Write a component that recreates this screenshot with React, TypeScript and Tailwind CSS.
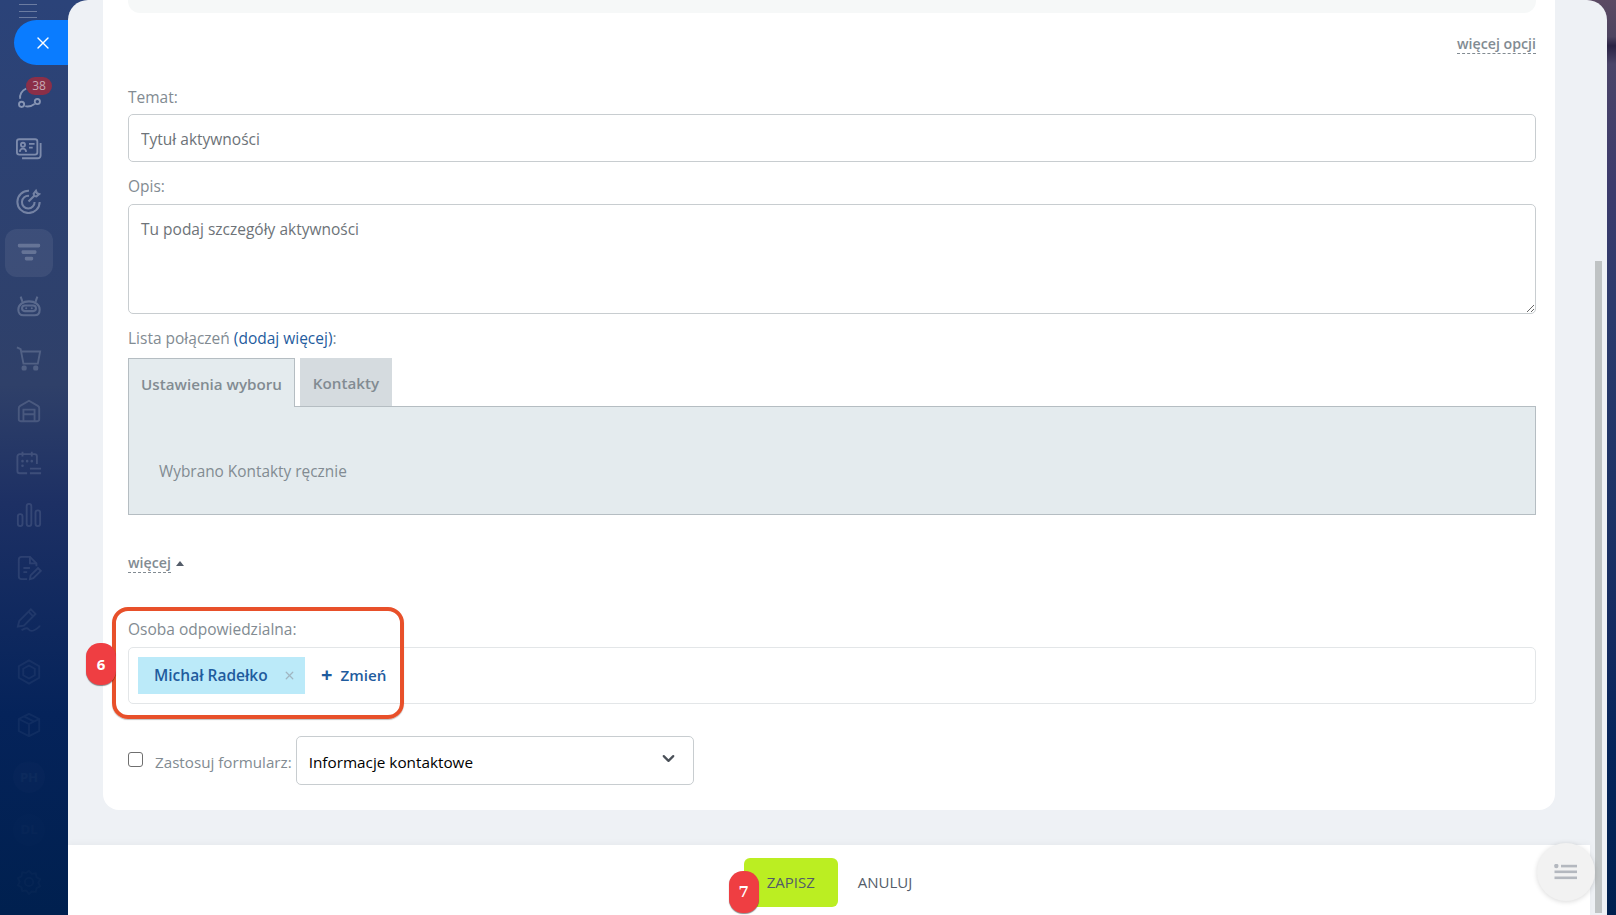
import { ChevronDown, X } from 'lucide-react';

// sidebar icons, drawn on a 28x28 box
const iconClass = 'w-[26px] h-[26px]';

function ConnectIcon() {
  return (
    <svg viewBox="0 0 28 28" fill="none" stroke="currentColor" strokeWidth="2" className={iconClass}>
      <circle cx="6" cy="23" r="2.8" />
      <circle cx="23" cy="20" r="2.8" />
      <path d="M4.5 17c-.8-4 1.5-9 6.500-11" />
      <path d="M10 25c3.500.8 7-.2 10-2.500" />
    </svg>
  );
}

function CardIcon() {
  return (
    <svg viewBox="0 0 28 28" fill="none" stroke="currentColor" strokeWidth="2" className={iconClass}>
      <rect x="1" y="3.5" width="22" height="16.5" rx="2.5" />
      <circle cx="7.5" cy="9.5" r="2.2" />
      <path d="M4 17c.4-2.400 2-3.400 3.500-3.400s3.100 1 3.500 3.400" />
      <path d="M14 8.500h6M14 12.500h4" />
      <path d="M26.500 7.500v13.500a3 3 0 0 1-3 3H6.500" />
    </svg>
  );
}

function TargetIcon() {
  return (
    <svg viewBox="0 0 28 28" fill="none" stroke="currentColor" strokeWidth="2.2" className={iconClass}>
      <path d="M14 3a12 12 0 1 0 11.500 12" />
      <path d="M14 8.500a6.800 6.800 0 1 0 6 6.500" />
      <path d="M13.500 14.500l6.500-6.500" />
      <path d="M19 6l2.500-3 1 2.500 2.500 1-3 2.500-2.500-.5z" />
    </svg>
  );
}

function FunnelIcon() {
  return (
    <svg viewBox="0 0 28 28" fill="currentColor" className={iconClass}>
      <rect x="2" y="4" width="24" height="4" rx="1.5" />
      <rect x="6" y="11" width="16" height="4" rx="1.5" />
      <rect x="9.5" y="18" width="9" height="4" rx="1.5" />
    </svg>
  );
}

function RobotIcon() {
  return (
    <svg viewBox="0 0 28 28" fill="none" stroke="currentColor" strokeWidth="2.2" className={iconClass}>
      <path d="M2.500 18C2.500 12.500 7.500 9 14 9s11.500 3.500 11.500 9c0 3.500-2 6-5.500 6H8c-3.500 0-5.500-2.500-5.500-6z" />
      <rect x="6.5" y="13.5" width="15" height="6" rx="3" />
      <path d="M7 9.500L5 4M21 9.500L23 4" />
      <path d="M11 16.500h.01M17 16.500h.01" strokeLinecap="round" />
    </svg>
  );
}

function CartIcon() {
  return (
    <svg viewBox="0 0 28 28" fill="none" stroke="currentColor" strokeWidth="2" className={iconClass}>
      <path d="M1 2.500l4 2 3 15.500h15.500L26 7H5.500" />
      <rect x="7" y="23" width="3.5" height="3.5" rx="1" fill="currentColor" />
      <rect x="19.5" y="23" width="3.5" height="3.5" rx="1" fill="currentColor" />
    </svg>
  );
}

function GarageIcon() {
  return (
    <svg viewBox="0 0 28 28" fill="none" stroke="currentColor" strokeWidth="2" className={iconClass}>
      <path d="M3 23V11c0-1.200.6-2 1.500-2.500L14 3l9.500 5.500c.9.500 1.500 1.300 1.500 2.500v12a2 2 0 0 1-2 2H5a2 2 0 0 1-2-2z" />
      <path d="M8 25V12.500h12V25M8 17.500h12" />
    </svg>
  );
}

function CalendarIcon() {
  return (
    <svg viewBox="0 0 28 28" fill="none" stroke="currentColor" strokeWidth="2" className={iconClass}>
      <path d="M12 25H4a2.500 2.500 0 0 1-2.500-2.500V7A2.500 2.500 0 0 1 4 4.500h16A2.500 2.500 0 0 1 22.500 7v8" />
      <path d="M7 2v5M17 2v5" />
      <path d="M7 12h.01M12 12h.01M17 12h.01M7 17h.01" strokeWidth="2.8" strokeLinecap="round" />
      <path d="M15 20h12M15 25h12" />
    </svg>
  );
}

function BarsIcon() {
  return (
    <svg viewBox="0 0 28 28" fill="none" stroke="currentColor" strokeWidth="2" className={iconClass}>
      <rect x="2" y="13" width="5" height="13" rx="2.5" />
      <rect x="11.5" y="2" width="5" height="24" rx="2.5" />
      <rect x="21" y="9" width="5" height="17" rx="2.5" />
    </svg>
  );
}

function NoteIcon() {
  return (
    <svg viewBox="0 0 28 28" fill="none" stroke="currentColor" strokeWidth="2" className={iconClass}>
      <path d="M12 26H6a3 3 0 0 1-3-3V5a3 3 0 0 1 3-3h9l7 7v3" />
      <path d="M15 2v7h7" />
      <path d="M8 14h7M8 18.500h4" />
      <path d="M15 26l.7-4 8-8 3 3-8 8z" />
    </svg>
  );
}

function PenIcon() {
  return (
    <svg viewBox="0 0 28 28" fill="none" stroke="currentColor" strokeWidth="2" className={iconClass}>
      <path d="M2 21l1.500-6L16 2.500l5 5L8.500 20z" />
      <path d="M13.500 5l5 5" />
      <path d="M6 25c3-2 6-3 7.500-1s3 2.500 6 1 6-3 6-5" />
    </svg>
  );
}

function HexIcon() {
  return (
    <svg viewBox="0 0 28 28" fill="none" stroke="currentColor" strokeWidth="2" className={iconClass}>
      <path d="M14 1.500l11 6.300v12.400l-11 6.300-11-6.300V7.800z" />
      <path d="M14 7l6.200 3.500v7L14 21l-6.200-3.500v-7z" />
    </svg>
  );
}

function BoxIcon() {
  return (
    <svg viewBox="0 0 28 28" fill="none" stroke="currentColor" strokeWidth="2" className={iconClass}>
      <path d="M14 2l11 5.500v13L14 26 3 20.500v-13z" />
      <path d="M3 7.500L14 13l11-5.500M14 13v13M8.500 4.700l11 5.600" />
    </svg>
  );
}

function GearIcon() {
  return (
    <svg viewBox="0 0 28 28" fill="none" stroke="currentColor" strokeWidth="2" className={iconClass}>
      <path d="M14 2l3 3.200 4.300-.6.800 4.300 3.900 2-2 3.900 2 3.900-3.900 2-.8 3.900-4.300-.4L14 27l-3-3.800-4.300.4-.8-3.900-3.900-2 2-3.900-2-3.900 3.900-2 .8-4.300 4.300.6z" />
      <circle cx="14" cy="14" r="4.5" />
    </svg>
  );
}

function Initials({ text }: { text: string }) {
  return (
    <div className="w-8 h-8 rounded-full bg-white/30 flex items-center justify-center text-[13px] font-bold leading-none">
      {text}
    </div>
  );
}

const railItems = [
  { icon: <ConnectIcon />, tone: 'opacity-50' },
  { icon: <CardIcon />, tone: 'opacity-45' },
  { icon: <TargetIcon />, tone: 'opacity-40' },
  { icon: <FunnelIcon />, tone: 'opacity-25', active: true },
  { icon: <RobotIcon />, tone: 'opacity-25' },
  { icon: <CartIcon />, tone: 'opacity-20' },
  { icon: <GarageIcon />, tone: 'opacity-[0.17]' },
  { icon: <CalendarIcon />, tone: 'opacity-15' },
  { icon: <BarsIcon />, tone: 'opacity-[0.13]' },
  { icon: <NoteIcon />, tone: 'opacity-[0.11]' },
  { icon: <PenIcon />, tone: 'opacity-[0.08]' },
  { icon: <HexIcon />, tone: 'opacity-[0.06]' },
  { icon: <BoxIcon />, tone: 'opacity-[0.05]' },
  { icon: <Initials text="PH" />, tone: 'opacity-[0.04]' },
  { icon: <Initials text="DL" />, tone: 'opacity-[0.02]' },
  { icon: <GearIcon />, tone: 'opacity-[0.02]' },
];

function Sidebar() {
  return (
    <aside className="w-[68px] h-full shrink-0 flex flex-col overflow-hidden bg-[linear-gradient(180deg,#2b4379_0%,#2f4069_42%,#1d3064_55%,#05235a_78%,#00204f_100%)]">
      <div className="h-5 pl-[19px] pt-1 shrink-0">
        <div className="w-[18px] h-[14px] flex flex-col justify-between opacity-30">
          <div className="h-px bg-white" />
          <div className="h-px bg-white" />
          <div className="h-px bg-white" />
        </div>
      </div>
      <div className="ml-[14px] w-[54px] h-[45px] shrink-0 rounded-l-full bg-[#0a7cff] flex items-center justify-center pl-[3px] text-white">
        <X size={20} strokeWidth={1.6} />
      </div>
      <div className="mt-[5px] flex flex-col">
        {railItems.map((item, i) => (
          <div key={i} className="relative h-[52.4px] shrink-0 flex items-center justify-center pr-[10px]">
            {item.active && <div className="absolute left-[5px] top-[2px] w-12 h-12 rounded-[12px] bg-white/[0.07]" />}
            <div className={`relative text-[#dfe5f2] ${item.tone}`}>{item.icon}</div>
            {i === 0 && (
              <div className="absolute left-[26px] top-[7px] w-[26px] h-[18px] rounded-full bg-[#8b2f48] text-[#c7a9b4] text-[12px] leading-[18px] text-center">
                38
              </div>
            )}
          </div>
        ))}
      </div>
    </aside>
  );
}

function Badge({ value, className }: { value: string; className: string }) {
  return (
    <div
      className={`absolute w-[30px] h-[42px] rounded-[14px] bg-[#ef3e42] text-white font-bold text-[15px] flex items-center justify-center shadow-[0_1px_1px_rgba(0,0,0,0.45)] z-10 ${className}`}
    >
      {value}
    </div>
  );
}

function DashedLink({ children }: { children: React.ReactNode }) {
  return (
    <span className="inline-block text-[14.2px] font-semibold text-[#828b92] leading-[19px] border-b border-dashed border-[#828b92]">
      {children}
    </span>
  );
}

function FormCard() {
  return (
    <div className="h-full rounded-b-[16px] bg-white pl-[25px] pr-[19px]">
      <div className="h-[13px] rounded-b-[12px] bg-[#f6f8f8]" />

      <div className="mt-[21px] h-5 flex justify-end">
        <DashedLink>więcej opcji</DashedLink>
      </div>

      <label className="block mt-[33px] h-5 leading-5">Temat:</label>
      <input
        placeholder="Tytuł aktywności"
        className="block mt-[7px] w-full h-12 px-3 pt-px rounded-[5px] border border-[#c8cdd0] bg-white outline-none placeholder:text-[#6d7378]"
      />

      <label className="block mt-[14px] h-5 leading-5">Opis:</label>
      <textarea
        placeholder="Tu podaj szczegóły aktywności"
        className="block mt-[8px] w-full h-[110px] px-3 py-[13px] leading-[22px] rounded-[5px] border border-[#c8cdd0] bg-white outline-none placeholder:text-[#6d7378]"
      />

      <div className="mt-[14px] h-5 leading-5">
        Lista połączeń <span className="text-[#1f5c9e]">(dodaj więcej)</span>:
      </div>

      <div className="mt-[10px] flex items-end">
        <div className="relative z-10 -mb-px w-[167px] h-[49px] pt-[2px] bg-[#e4ebee] border border-b-0 border-[#b5bdc2] flex items-center justify-center font-semibold text-[15.2px]">
          Ustawienia wyboru
        </div>
        <div className="ml-[5px] w-[92px] h-[48px] pt-[2px] bg-[#d5dbdf] flex items-center justify-center font-semibold text-[15.2px]">
          Kontakty
        </div>
      </div>
      <div className="h-[109px] bg-[#e4ebee] border border-[#b5bdc2] flex items-center pl-[30px] pt-[23px] text-[15.4px]">
        Wybrano Kontakty ręcznie
      </div>

      <div className="mt-[38px] h-5 flex items-center gap-[5px]">
        <DashedLink>więcej</DashedLink>
        <div className="w-0 h-0 border-x-[4px] border-x-transparent border-b-[5px] border-b-[#535c69]" />
      </div>

      <div className="relative mt-[47px]">
        <div className="absolute -left-[16px] -top-[13px] w-[292px] h-[112px] rounded-[16px] border-[4.5px] border-[#e8502a] shadow-[0_1px_1px_rgba(0,0,0,0.25)] pointer-events-none" />
        <Badge value="6" className="-left-[42px] top-[23px]" />
        <div className="h-5 leading-[18px]">Osoba odpowiedzialna:</div>
        <div className="mt-[7px] h-[57px] rounded-[5px] border border-[#e3e6e8] flex items-center pl-[9px]">
          <div className="w-[167px] h-[37px] bg-[#bbeaf9] flex items-center pl-4 font-semibold text-[#1f5c9e]">
            Michał Radełko
            <X size={13} strokeWidth={2.4} className="ml-[15px] text-[#a0b6c2]" />
          </div>
          <div className="ml-4 flex items-center gap-2 font-semibold text-[#1f5c9e] text-[15.2px]">
            <span className="text-[20px] leading-none font-bold">+</span>
            Zmień
          </div>
        </div>
      </div>

      <div className="mt-[32px] flex items-center">
        <input
          type="checkbox"
          className="appearance-none w-[15px] h-[15px] rounded-[3px] border border-[#6f6f6f] bg-white -mt-[2px]"
        />
        <span className="ml-3 mt-[3px] text-[15.2px]">Zastosuj formularz:</span>
        <div className="relative ml-[4px] w-[398px] h-[49px]">
          <select className="appearance-none w-full h-full pl-3 pt-[3px] rounded-[5px] border border-[#c8cdd0] bg-white text-black outline-none text-[15.3px]">
            <option>Informacje kontaktowe</option>
          </select>
          <ChevronDown size={19} strokeWidth={2.8} className="absolute right-[16px] top-[13px] text-[#4a5058]" />
        </div>
      </div>
    </div>
  );
}

export default function App() {
  return (
    <div className="w-[1616px] h-[915px] flex overflow-hidden bg-[#2b4379] font-['Open_Sans',sans-serif] text-[15.5px] text-[#828b92]">
      <Sidebar />

      <main className="relative z-10 w-[1539px] h-full shrink-0 flex rounded-t-[20px] overflow-hidden bg-[#eef1f5]">
        <div className="w-[1522px] h-full flex flex-col">
          <div className="h-[845px] shrink-0 px-[35px] pb-[35px]">
            <FormCard />
          </div>
          <footer className="h-[70px] bg-white flex justify-center items-start pt-[13px] pr-[2px] gap-5 text-[15px] text-[#535c69] shadow-[0_-2px_6px_rgba(0,0,0,0.03)]">
            <div className="relative w-[94px] h-[49px] rounded-[6px] bg-[#bbee22] flex items-center justify-center">
              <Badge value="7" className="-left-[15px] top-[13px] font-['DejaVu_Serif',serif]" />
              ZAPISZ
            </div>
            <div className="h-[49px] flex items-center">ANULUJ</div>
          </footer>
        </div>
        <div className="w-[17px] h-full pt-[261px] pb-[2px] px-[5px]">
          <div className="h-full bg-[#bfc3c4]" />
        </div>
        <div className="absolute left-[1469px] top-[843px] w-[58px] h-[58px] rounded-full bg-[#f2f2f2] shadow-[0_1px_5px_rgba(0,0,0,0.15)] flex items-center justify-center">
          <svg viewBox="0 0 24 16" className="w-6 h-4" fill="#b4b8bf">
            <circle cx="2.3" cy="2" r="2.2" />
            <rect x="7" y="0.8" width="16" height="2.6" />
            <rect x="0.5" y="6.5" width="22.5" height="2.6" />
            <rect x="0.5" y="12.5" width="22.5" height="2.6" />
          </svg>
        </div>
      </main>

      <div className="w-[29px] h-full shrink-0 -ml-5 bg-[linear-gradient(180deg,#5b4a63_0%,#4d4460_4%,#2a2344_5%,#4a4468_7%,#3c3b6c_20%,#2a3a6c_35%,#1d3366_55%,#132a60_70%,#04245a_82%,#00204f_100%)]" />
    </div>
  );
}
